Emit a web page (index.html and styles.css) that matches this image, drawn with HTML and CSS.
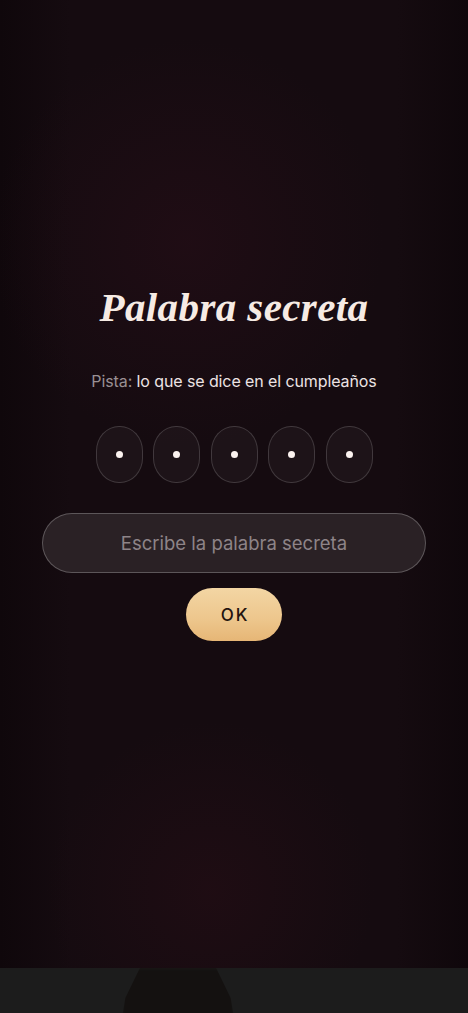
FILE: index.html
```html
<!DOCTYPE html>
<html lang="es">
<head>
<meta charset="utf-8">
<title>Palabra secreta</title>
<link rel="stylesheet" href="styles.css">
</head>
<body>
<main class="screen">
  <h1 class="title">Palabra secreta</h1>
  <p class="hint"><span class="hint-label">Pista:</span> lo que se dice en el cumpleaños</p>
  <div class="slots">
    <span class="slot"><i class="dot"></i></span>
    <span class="slot"><i class="dot"></i></span>
    <span class="slot"><i class="dot"></i></span>
    <span class="slot"><i class="dot"></i></span>
    <span class="slot"><i class="dot"></i></span>
  </div>
  <input class="field" type="text" placeholder="Escribe la palabra secreta">
  <button class="ok" type="button">OK</button>
</main>
<div class="bottom-bar"><span class="shadow-shape"></span></div>
</body>
</html>
```
FILE: styles.css
```css
html, body {
  margin: 0;
  padding: 0;
}
body {
  width: 468px;
  height: 1013px;
  overflow: hidden;
  background: #130a0e;
  font-family: Inter, "Noto Sans", sans-serif;
}
.screen {
  height: 968px;
  box-sizing: border-box;
  padding-top: 281px;
  display: flex;
  flex-direction: column;
  align-items: center;
  background:
    radial-gradient(ellipse 60% 30% at 40% 25%, rgba(40, 14, 24, 0.55), rgba(40, 14, 24, 0) 70%),
    radial-gradient(ellipse 50% 25% at 45% 92%, rgba(40, 14, 22, 0.5), rgba(40, 14, 22, 0) 70%),
    linear-gradient(90deg, #0f070b 0%, #150b10 15%, #150b10 85%, #0f070b 100%);
}
.title {
  margin: 0;
  font-family: "Liberation Serif", "DejaVu Serif", serif;
  font-style: italic;
  font-weight: 700;
  font-size: 41px;
  line-height: 52px;
  color: #f6ebe4;
  letter-spacing: 0.4px;
}
.hint {
  margin: 37px 0 0;
  font-size: 16px;
  line-height: 22px;
  color: #ece3e4;
  letter-spacing: -0.1px;
}
.hint-label {
  color: #9a9094;
}
.slots {
  margin-top: 34px;
  display: flex;
  gap: 10.5px;
}
.slot {
  width: 47px;
  height: 57px;
  box-sizing: border-box;
  border: 1px solid rgba(255, 255, 255, 0.16);
  border-radius: 23px / 25px;
  background: rgba(255, 255, 255, 0.035);
  display: flex;
  align-items: center;
  justify-content: center;
}
.dot {
  width: 7px;
  height: 7px;
  border-radius: 50%;
  background: #fbf2ef;
}
.field {
  margin-top: 30px;
  width: 384px;
  height: 60px;
  box-sizing: border-box;
  border: 1px solid rgba(255, 255, 255, 0.24);
  border-radius: 30px;
  background: #2a2125;
  color: #ece3e4;
  font-family: Inter, "Noto Sans", sans-serif;
  font-size: 18.5px;
  text-align: center;
  outline: none;
  padding: 0 20px;
}
.field::placeholder {
  color: #8e8488;
}
.ok {
  margin-top: 15px;
  width: 96px;
  height: 53px;
  border: none;
  border-radius: 27px;
  background: linear-gradient(180deg, #f3d6a4 0%, #edc68c 60%, #e6b676 100%);
  color: #24140f;
  font-family: Inter, "Noto Sans", sans-serif;
  font-size: 17px;
  font-weight: 500;
  letter-spacing: 2px;
  padding: 0 0 0 2px;
}
.bottom-bar {
  height: 45px;
  background: #1c1c1c;
  position: relative;
  overflow: hidden;
}
.shadow-shape {
  position: absolute;
  left: 122px;
  top: 0;
  width: 112px;
  height: 50px;
  background: #141110;
  clip-path: polygon(16% 0, 84% 0, 97% 60%, 100% 100%, 0 100%, 3% 60%);
  filter: blur(2px);
}
```
